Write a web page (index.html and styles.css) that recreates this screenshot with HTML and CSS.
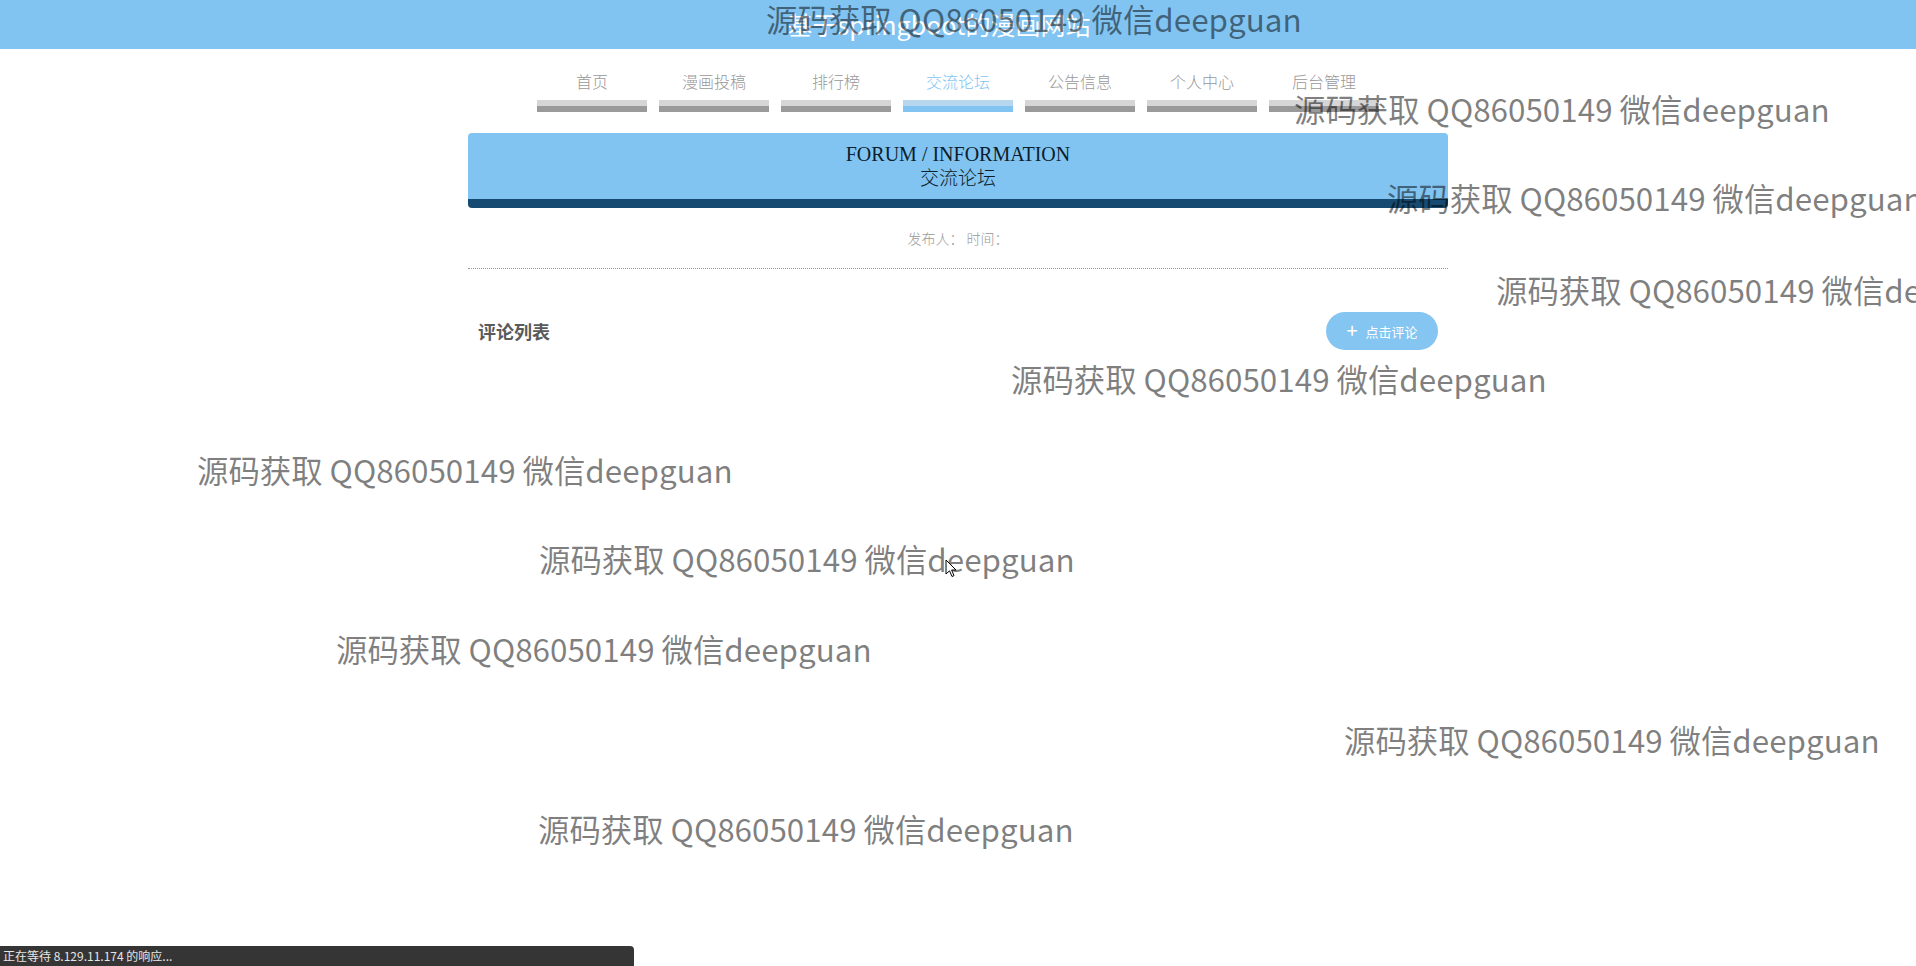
FILE: index.html
```html
<!DOCTYPE html>
<html lang="zh-CN">
<head>
<meta charset="utf-8">
<title>基于springboot的漫画网站</title>
<link rel="stylesheet" href="styles.css">
</head>
<body>
<header class="topbar">
  <h1 class="site-title">基于springboot的漫画网站</h1>
</header>

<nav class="nav">
  <ul class="nav-list">
    <li class="nav-item"><a class="nav-link" href="#">首页</a><span class="nav-bar"></span></li>
    <li class="nav-item"><a class="nav-link" href="#">漫画投稿</a><span class="nav-bar"></span></li>
    <li class="nav-item"><a class="nav-link" href="#">排行榜</a><span class="nav-bar"></span></li>
    <li class="nav-item active"><a class="nav-link" href="#">交流论坛</a><span class="nav-bar"></span></li>
    <li class="nav-item"><a class="nav-link" href="#">公告信息</a><span class="nav-bar"></span></li>
    <li class="nav-item"><a class="nav-link" href="#">个人中心</a><span class="nav-bar"></span></li>
    <li class="nav-item"><a class="nav-link" href="#">后台管理</a><span class="nav-bar"></span></li>
  </ul>
</nav>

<main class="container">
  <section class="banner">
    <div class="banner-en">FORUM / INFORMATION</div>
    <div class="banner-cn">交流论坛</div>
  </section>

  <div class="meta">发布人： 时间：</div>
  <div class="divider"></div>

  <div class="comments-head">
    <h2 class="comments-title">评论列表</h2>
    <button class="comment-btn" type="button"><span class="plus">+</span>点击评论</button>
  </div>
</main>

<div class="watermarks">
  <span class="wm wm1">源码获取 QQ86050149 微信deepguan</span>
  <span class="wm wm2">源码获取 QQ86050149 微信deepguan</span>
  <span class="wm wm3">源码获取 QQ86050149 微信deepguan</span>
  <span class="wm wm4">源码获取 QQ86050149 微信deepguan</span>
  <span class="wm wm5">源码获取 QQ86050149 微信deepguan</span>
  <span class="wm wm6">源码获取 QQ86050149 微信deepguan</span>
  <span class="wm wm7">源码获取 QQ86050149 微信deepguan</span>
  <span class="wm wm8">源码获取 QQ86050149 微信deepguan</span>
  <span class="wm wm9">源码获取 QQ86050149 微信deepguan</span>
  <span class="wm wm10">源码获取 QQ86050149 微信deepguan</span>
</div>

<svg class="cursor" width="12" height="19" viewBox="0 0 12 19" aria-hidden="true">
  <path d="M1 1 L1 15 L4.5 11.8 L7 17.5 L9 16.6 L6.6 11 L11 11 Z" fill="#fff" stroke="#000" stroke-width="1"/>
</svg>

<div class="statusbar">正在等待 8.129.11.174 的响应...</div>
</body>
</html>
```

FILE: styles.css
```css
html, body {
  margin: 0;
  padding: 0;
  background: #fff;
}

body {
  font-family: "Noto Sans CJK SC", "Noto Sans", sans-serif;
  width: 1916px;
  height: 966px;
  overflow: hidden;
  position: relative;
}

.topbar {
  height: 49px;
  background: #82c4f1;
  display: flex;
  align-items: center;
  justify-content: center;
  padding-right: 38px;
}

.site-title {
  margin: 0;
  font-size: 25px;
  font-weight: 400;
  color: #fff;
  line-height: 49px;
}

.nav {
  margin-top: 20px;
}

.nav-list {
  list-style: none;
  margin: 0;
  padding: 0;
  display: flex;
  justify-content: center;
  gap: 12px;
}

.nav-item {
  width: 110px;
  display: flex;
  flex-direction: column;
  align-items: center;
}

.nav-link {
  display: block;
  height: 24px;
  line-height: 24px;
  font-size: 16px;
  font-weight: 300;
  color: #999;
  text-decoration: none;
}

.nav-bar {
  display: block;
  width: 110px;
  height: 6px;
  margin-top: 7px;
  background: #d6d6d6;
  border-bottom: 6px solid #9a9a9a;
}

.nav-item.active .nav-link {
  color: #82c4f1;
}

.nav-item.active .nav-bar {
  background: #b6d7ee;
  border-bottom-color: #82c4f1;
}

.container {
  width: 980px;
  margin: 21px auto 0;
}

.banner {
  background: #82c4f1;
  border-radius: 4px;
  border-bottom: 9px solid #174a70;
  padding: 10px 0 9px;
  text-align: center;
  color: #0c1e2c;
}

.banner-en {
  font-family: "Liberation Serif", "Times New Roman", serif;
  font-size: 20px;
  line-height: 22px;
}

.banner-cn {
  font-family: "Liberation Serif", "Noto Sans CJK SC", serif;
  font-size: 19px;
  line-height: 23px;
  font-weight: 300;
  margin-top: 2px;
}

.meta {
  margin-top: 20px;
  height: 20px;
  line-height: 20px;
  font-size: 14px;
  font-weight: 300;
  color: #999;
  text-align: center;
}

.divider {
  margin-top: 20px;
  border-top: 1px dotted #999;
}

.comments-head {
  margin-top: 43px;
  padding: 0 10px;
  height: 38px;
  display: flex;
  align-items: center;
  justify-content: space-between;
}

.comments-title {
  margin: 0;
  font-size: 18px;
  font-weight: 700;
  color: #5a5a5a;
}

.comment-btn {
  width: 112px;
  height: 38px;
  border: none;
  border-radius: 19px;
  background: #85c5f1;
  color: #fff;
  font-family: "Noto Sans CJK SC", sans-serif;
  font-size: 13px;
  display: flex;
  align-items: center;
  justify-content: center;
  gap: 8px;
  padding: 0;
}

.plus {
  font-size: 20px;
  line-height: 1;
  font-weight: 400;
  margin-top: -2px;
}

.watermarks {
  position: absolute;
  inset: 0;
  overflow: hidden;
  pointer-events: none;
}

.wm {
  position: absolute;
  white-space: nowrap;
  font-family: "Noto Sans CJK SC", sans-serif;
  font-size: 31.4px;
  line-height: 40px;
  color: rgba(0, 0, 0, 0.5);
}

.wm1 { left: 766px; top: -1px; }
.wm2 { left: 1294px; top: 89px; }
.wm3 { left: 1387px; top: 178px; }
.wm4 { left: 1496px; top: 270px; }
.wm5 { left: 1011px; top: 359px; }
.wm6 { left: 197px; top: 450px; }
.wm7 { left: 539px; top: 539px; }
.wm8 { left: 336px; top: 629px; }
.wm9 { left: 1344px; top: 720px; }
.wm10 { left: 538px; top: 809px; }

.cursor {
  position: absolute;
  left: 945px;
  top: 559px;
}

.statusbar {
  position: absolute;
  left: 0;
  bottom: 0;
  width: 631px;
  height: 20px;
  line-height: 20px;
  padding-left: 3px;
  background: #353535;
  border-top-right-radius: 4px;
  color: #e6e6e6;
  font-size: 12px;
  font-family: "Noto Sans CJK SC", sans-serif;
}
```
